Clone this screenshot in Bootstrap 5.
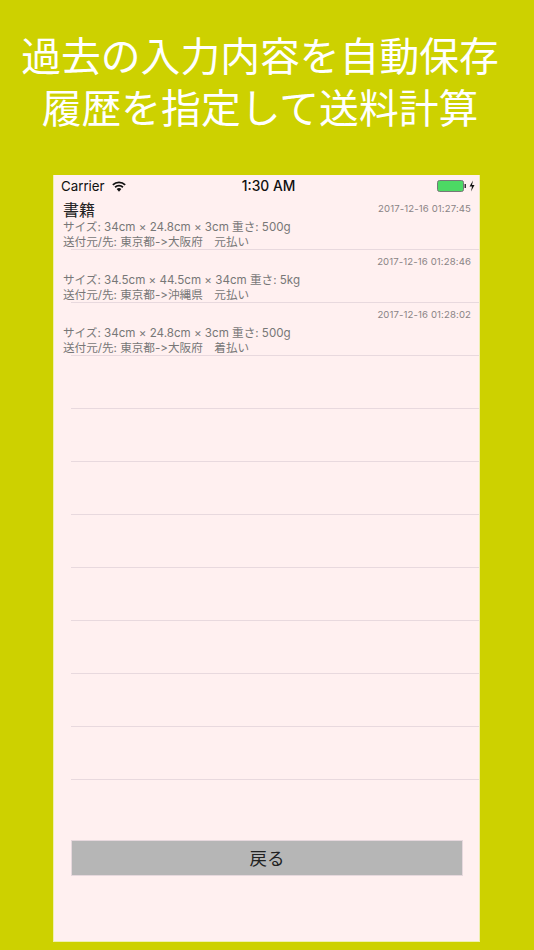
<!DOCTYPE html>
<html lang="ja">
<head>
<meta charset="utf-8">
<title>履歴</title>
<link href="https://cdn.jsdelivr.net/npm/bootstrap@5.3.0/dist/css/bootstrap.min.css" rel="stylesheet">
<style>
html,body{height:950px;overflow:hidden}
body{background:#cdd100;font-family:"Liberation Sans","Noto Sans CJK JP",sans-serif;width:534px}
.promo{height:175px;padding:28px 14px 0 0;color:#fff;font-family:"Noto Sans CJK JP",sans-serif;font-weight:400;font-size:39.8px;line-height:51.5px;text-align:center;white-space:nowrap}
.phone{width:427px;height:767px;margin-left:53px;background:#fff0f0;position:relative;border:1px solid #eef0b0;border-top:0}
.statusbar{height:22px;padding:0 4px 0 7px;font-family:Inter,"Liberation Sans",sans-serif;font-size:13px;color:#111}
.statusbar .clock{font-weight:500;font-size:13.8px;position:absolute;left:0;right:0;text-align:center;top:2px;line-height:18px;padding-left:4px}
.carrier{font-size:13.3px;line-height:22px}
.rowitem{height:53px;margin:0;padding:0;position:relative;list-style:none;font-family:Inter,"Noto Sans CJK JP",sans-serif;font-variant-ligatures:none;font-feature-settings:"calt" 0,"liga" 0}
.rowitem::after{content:"";position:absolute;left:17px;right:0;bottom:0;height:1px;background:#e8d9de}
.rowtitle{position:absolute;left:9px;top:1px;font-family:"Noto Sans CJK JP",sans-serif;font-size:16px;line-height:22px;color:#222}
.rowdate{position:absolute;right:8px;top:5px;font-size:9.6px;line-height:13px;color:#8a8486;letter-spacing:.11px}
.rowline{position:absolute;left:9px;font-size:11.6px;line-height:15px;color:#777;white-space:nowrap}
.l1{top:23px}.l2{top:38px}
.backwrap{padding:60px 17px 0 17px}
.backbtn{width:392px;height:36px;background:#b6b6b6;border:1px solid #e6d8dd;border-radius:0;color:#222;font-family:"Noto Sans CJK JP",sans-serif;font-size:17.5px;line-height:1;padding:0}
.backbtn:hover{background:#b6b6b6;color:#222}
.wifigap{margin-left:7px}
</style>
</head>
<body>
<div class="promo">過去の入力内容を自動保存<br>履歴を指定して送料計算</div>
<div class="phone">
  <div class="statusbar d-flex align-items-center justify-content-between">
    <div class="d-flex align-items-center">
      <span class="carrier">Carrier</span>
      <svg class="wifigap" width="14" height="11" viewBox="0 0 15 11"><path d="M7.500 11 5 8.300a3.500 3.500 0 0 1 5 0Z" fill="#111"/><path d="M3.300 6.300a6 6 0 0 1 8.400 0M.9 3.800a9.500 9.500 0 0 1 13.200 0" fill="none" stroke="#111" stroke-width="1.900"/></svg>
    </div>
    <span class="clock">1:30 AM</span>
    <svg width="38" height="12" viewBox="0 0 38 12"><rect x=".5" y=".5" width="26" height="11" rx="2" fill="#4cd964" stroke="#777"/><rect x="27.500" y="4" width="1.500" height="4" fill="#333"/><path d="M36 .5 32.500 6.500h2.500L34 11.500 37.500 5H35Z" fill="#111"/></svg>
  </div>
  <ul class="m-0 p-0">
    <li class="rowitem"><span class="rowtitle">書籍</span><span class="rowdate">2017-12-16 01:27:45</span><span class="rowline l1">サイズ: 34cm × 24.8cm × 3cm 重さ: 500g</span><span class="rowline l2">送付元/先: 東京都-&gt;大阪府　元払い</span></li>
    <li class="rowitem"><span class="rowdate">2017-12-16 01:28:46</span><span class="rowline l1">サイズ: 34.5cm × 44.5cm × 34cm 重さ: 5kg</span><span class="rowline l2">送付元/先: 東京都-&gt;沖縄県　元払い</span></li>
    <li class="rowitem"><span class="rowdate">2017-12-16 01:28:02</span><span class="rowline l1">サイズ: 34cm × 24.8cm × 3cm 重さ: 500g</span><span class="rowline l2">送付元/先: 東京都-&gt;大阪府　着払い</span></li>
    <li class="rowitem"></li><li class="rowitem"></li><li class="rowitem"></li><li class="rowitem"></li><li class="rowitem"></li><li class="rowitem"></li><li class="rowitem"></li><li class="rowitem"></li>
  </ul>
  <div class="backwrap"><button type="button" class="btn backbtn">戻る</button></div>
</div>
<script src="https://cdn.jsdelivr.net/npm/bootstrap@5.3.0/dist/js/bootstrap.bundle.min.js"></script>
</body>
</html>
